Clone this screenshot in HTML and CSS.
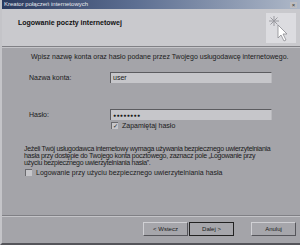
FILE: index.html
```html
<!DOCTYPE html>
<html lang="pl">
<head>
<meta charset="UTF-8">
<title>Kreator połączeń internetowych</title>
<link rel="stylesheet" href="styles.css">
</head>
<body>
<div class="window">
    <div class="titlebar">
        <span class="title">Kreator połączeń internetowych</span>
        <span class="close">&#215;</span>
    </div>
    <div class="header">
        <h1>Logowanie poczty internetowej</h1>
        <div class="logo">
            <svg width="30" height="30" viewBox="0 0 30 30">
                <g stroke="#9a9aa0" stroke-width="1" fill="none">
                    <line x1="8" y1="3" x2="8" y2="13"/>
                    <line x1="3" y1="8" x2="13" y2="8"/>
                    <line x1="4.5" y1="4.5" x2="11.5" y2="11.5"/>
                    <line x1="11.5" y1="4.5" x2="4.5" y2="11.5"/>
                </g>
                <path d="M12 12 L12 25 L15 22 L18 28 L20 27 L17 21 L21 21 Z" fill="#fff" stroke="#8a8a90" stroke-width="0.8"/>
            </svg>
        </div>
    </div>
    <div class="rule"></div>
    <div class="content">
        <p class="intro">Wpisz nazwę konta oraz hasło podane przez Twojego usługodawcę internetowego.</p>
        <div class="field">
            <label>Nazwa konta:</label>
            <div class="input">user</div>
        </div>
        <div class="field field-pass">
            <label>Hasło:</label>
            <div class="input dots">&#9679;&#9679;&#9679;&#9679;&#9679;&#9679;&#9679;&#9679;</div>
        </div>
        <div class="check remember"><span class="box checked">&#10003;</span>Zapamiętaj hasło</div>
        <p class="note">Jeżeli Twój usługodawca internetowy wymaga używania bezpiecznego uwierzytelniania<br>hasła przy dostępie do Twojego konta pocztowego, zaznacz pole „Logowanie przy<br>użyciu bezpiecznego uwierzytelniania hasła”.</p>
        <div class="check spa"><span class="box"></span>Logowanie przy użyciu bezpiecznego uwierzytelniania hasła</div>
    </div>
    <div class="rule bottom"></div>
    <div class="buttons">
        <button class="btn">&lt; Wstecz</button>
        <button class="btn default">Dalej &gt;</button>
        <button class="btn cancel">Anuluj</button>
    </div>
</div>
</body>
</html>
```

FILE: styles.css
```css
* {
    box-sizing: border-box;
}

body {
    margin: 0;
    background: #a4a4a9;
    font-family: "Liberation Sans", Arial, sans-serif;
    font-size: 7px;
    color: #1a1a1a;
}

.window {
    width: 300px;
    height: 245px;
    background: #a4a4a9;
    border-left: 2px solid #c4c4c8;
    border-bottom: 2px solid #55555a;
}

.titlebar {
    height: 9px;
    background: linear-gradient(to right, #2a3a5e, #5d6f92 45%, #aeb8c8);
    display: flex;
    align-items: center;
    justify-content: space-between;
    padding: 0 3px 0 2px;
}

.title {
    color: #e8e8ee;
    font-size: 6px;
    line-height: 9px;
}

.close {
    width: 7px;
    height: 6px;
    background: #bcbcc0;
    color: #333;
    font-size: 6px;
    line-height: 6px;
    text-align: center;
}

.header {
    height: 37px;
    background: #c9c9cd;
    display: flex;
    justify-content: space-between;
    align-items: flex-start;
    padding: 4px 4px 0 16px;
}

.header h1 {
    margin: 6px 0 0;
    font-size: 7px;
    font-weight: bold;
    color: #111;
}

.logo {
    width: 30px;
    height: 30px;
    background: #dcdce0;
}

.rule {
    height: 2px;
    border-top: 1px solid #808085;
    border-bottom: 1px solid #c4c4c8;
}

.content {
    padding: 5px 0 0 27px;
    height: 167px;
}

.intro {
    margin: 0 0 12px 2px;
}

.field {
    display: flex;
    align-items: center;
    height: 11px;
}

.field label {
    width: 81px;
}

.field-pass {
    margin-top: 26px;
}

.input {
    width: 162px;
    height: 11px;
    background: #c6c6ca;
    border-top: 1px solid #5c5c60;
    border-left: 1px solid #5c5c60;
    border-right: 1px solid #b8b8bc;
    padding-left: 2px;
    line-height: 10px;
}

.dots {
    font-size: 5px;
    letter-spacing: 0.4px;
}

.check {
    display: flex;
    align-items: center;
}

.remember {
    margin: 2px 0 0 82px;
}

.box {
    width: 7px;
    height: 7px;
    background: #c6c6ca;
    border-top: 1px solid #6a6a6e;
    border-left: 1px solid #6a6a6e;
    margin-right: 4px;
    font-size: 6px;
    line-height: 6px;
    text-align: center;
}

.note {
    margin: 16px 0 0 -5px;
    line-height: 7px;
    white-space: nowrap;
    letter-spacing: -0.3px;
}

.spa {
    margin: 3px 0 0 -4px;
}

.buttons {
    display: flex;
    padding: 5px 0 0 141px;
}

.btn {
    width: 45px;
    height: 14px;
    font-family: inherit;
    font-size: 6px;
    color: #1a1a1a;
    background: #a6a6ab;
    border: 1px solid;
    border-color: #d0d0d4 #55555a #55555a #d0d0d4;
    padding: 0;
}

.default {
    outline: 1px solid #222;
    outline-offset: -1px;
    margin-left: 1px;
}

.cancel {
    margin-left: 17px;
}
```
